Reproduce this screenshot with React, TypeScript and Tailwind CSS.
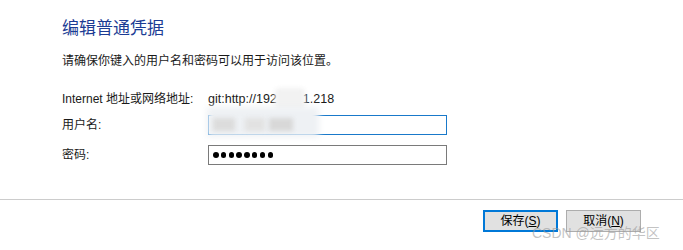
import React from 'react';

const FONT = { fontFamily: '"Liberation Sans", "Noto Sans CJK SC", sans-serif' };

function Row({ label, children }: { label: string; children: React.ReactNode }) {
  return (
    <div className="flex h-[20px] items-center">
      <div className="w-[146px] shrink-0 text-[12px] text-[#1a1a1a]">{label}</div>
      {children}
    </div>
  );
}

export default function App() {
  return (
    <div className="relative flex h-[250px] w-[683px] flex-col overflow-hidden bg-white" style={FONT}>
      <div className="flex h-[199px] flex-col pl-[62px] pt-[17px]">
        <h1 className="text-[17px] leading-[24px] font-normal text-[#1c3c94]">编辑普通凭据</h1>
        <p className="mt-[11px] text-[12px] leading-[18px] text-[#1a1a1a]">
          请确保你键入的用户名和密码可以用于访问该位置。
        </p>

        <div className="mt-[19px] flex flex-col">
          <Row label="Internet 地址或网络地址:">
            <div className="relative flex items-center text-[12.5px] text-[#1a1a1a]">
              <span>git:http://192</span>
              <span className="relative inline-block h-[14px] w-[26px]">
                <span className="absolute left-[-2px] top-[-4px] h-[22px] w-[30px] rounded-sm bg-[#f2f2f2] blur-[2px]" />
              </span>
              <span>1.218</span>
            </div>
          </Row>
          <div className="mt-[6px]">
            <Row label="用户名:">
              <div className="relative h-[20px] w-[239px] border border-[#1979ca] bg-white">
                <span className="absolute left-[-2px] top-[-9px] h-[30px] w-[112px] bg-[#eef1f4] blur-[3px]" />
                <span className="absolute left-[4px] top-[2px] h-[13px] w-[22px] bg-[#dcdcdc] blur-[2px]" />
                <span className="absolute left-[36px] top-[2px] h-[13px] w-[20px] bg-[#e2e2e2] blur-[2px]" />
                <span className="absolute left-[60px] top-[2px] h-[13px] w-[24px] bg-[#d8d8d8] blur-[2px]" />
              </div>
            </Row>
          </div>
          <div className="mt-[10px]">
            <Row label="密码:">
              <div className="flex h-[20px] w-[239px] items-center gap-[2.3px] border border-[#7a7a7a] bg-white pl-[4px]">
                {Array.from({ length: 8 }).map((_, i) => (
                  <span key={i} className="h-[5.5px] w-[5.5px] rounded-full bg-black" />
                ))}
              </div>
            </Row>
          </div>
        </div>
      </div>

      <div className="border-t border-[#cccccc]" />

      <div className="flex justify-end gap-[8px] pr-[42px] pt-[10px]">
        <button className="h-[22px] w-[75px] border-2 border-[#0078d7] bg-[#e1e1e1] text-[12px] leading-[18px] text-black">
          保存(<span className="underline">S</span>)
        </button>
        <button className="h-[22px] w-[75px] border border-[#adadad] bg-[#e1e1e1] text-[12px] leading-[20px] text-black">
          取消(<span className="underline">N</span>)
        </button>
      </div>

      <div className="pointer-events-none absolute left-[532px] top-[224px] text-[14px] leading-[18px] text-[#9a9a9a]/60">
        CSDN @远方的华区
      </div>
    </div>
  );
}
